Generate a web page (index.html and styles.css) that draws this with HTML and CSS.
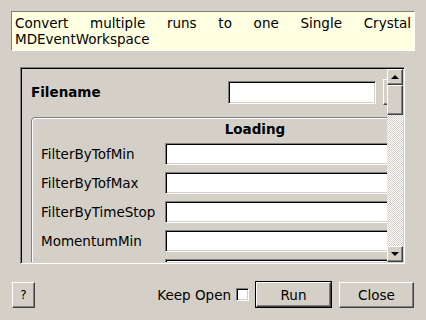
FILE: index.html
```html
<!DOCTYPE html>
<html lang="en">
<head>
    <meta charset="UTF-8">
    <title>Algorithm dialog</title>
    <link rel="stylesheet" href="styles.css">
</head>
<body>
    <div class="dialog">
        <div class="description">Convert multiple runs to one Single Crystal MDEventWorkspace</div>

        <div class="scroll-area">
            <div class="viewport">
                <div class="file-row">
                    <span class="file-label">Filename</span>
                    <span class="field file-field"></span>
                    <span class="button browse"></span>
                </div>

                <div class="group">
                    <div class="group-title">Loading</div>
                    <div class="prop-row">
                        <span class="prop-label">FilterByTofMin</span>
                        <span class="field"></span>
                    </div>
                    <div class="prop-row">
                        <span class="prop-label">FilterByTofMax</span>
                        <span class="field"></span>
                    </div>
                    <div class="prop-row">
                        <span class="prop-label">FilterByTimeStop</span>
                        <span class="field"></span>
                    </div>
                    <div class="prop-row">
                        <span class="prop-label">MomentumMin</span>
                        <span class="field"></span>
                    </div>
                    <!-- next row only shows its field edge above the fold -->
                    <div class="prop-row">
                        <span class="prop-label"></span>
                        <span class="field"></span>
                    </div>
                </div>
            </div>

            <!-- vertical scrollbar -->
            <div class="vscroll">
                <span class="button arrow-btn"><span class="arrow up"></span></span>
                <span class="button handle"></span>
                <span class="track"></span>
                <span class="button arrow-btn"><span class="arrow down"></span></span>
            </div>
        </div>

        <div class="bottom-bar">
            <span class="button help-btn">?</span>
            <span class="keep-open">Keep Open</span>
            <span class="checkbox"></span>
            <span class="default-frame"><span class="button run-btn">Run</span></span>
            <span class="button close-btn">Close</span>
        </div>
    </div>
</body>
</html>
```

FILE: styles.css
```css
* {
    box-sizing: border-box;
}

body {
    margin: 0;
    background-color: #d4d0c8;
    font-family: 'DejaVu Sans', sans-serif;
    font-size: 13.5px;
    color: #000;
    overflow: hidden;
}

.dialog {
    display: flex;
    flex-direction: column;
    height: 320px;
}

.description {
    margin: 11px 11px 0;
    height: 40px;
    padding: 3px 3px 0;
    line-height: 16px;
    text-align: justify;
    background-color: #ffffe1;
    border-top: 1px solid #808080;
    border-left: 1px solid #808080;
    border-right: 1px solid #fff;
    border-bottom: 1px solid #fff;
}

/* sunken frame of the scroll area */
.scroll-area {
    display: flex;
    margin: 16px 21px 0 20px;
    height: 197px;
    border: 1px solid;
    border-color: #808080 #fff #fff #808080;
    box-shadow: inset 1px 1px #000, inset -1px -1px #d4d0c8;
    padding: 1px;
}

.viewport {
    flex: 1;
    overflow: hidden;
    padding: 10px 0 0 9px;
}

.button {
    display: flex;
    align-items: center;
    justify-content: center;
    background-color: #d4d0c8;
    border: 1px solid;
    border-color: #fff #404040 #404040 #fff;
    box-shadow: inset -1px -1px #808080;
}

.field {
    display: block;
    background-color: #fff;
    border: 1px solid;
    border-color: #808080 #fff #fff #808080;
    box-shadow: inset 1px 1px #000, inset -1px -1px #d4d0c8;
}

.file-row {
    display: flex;
    align-items: center;
    height: 26px;
    width: 420px;
}

.file-label {
    width: 197px;
    font-weight: bold;
}

.file-field {
    width: 148px;
    height: 23px;
}

.browse {
    width: 30px;
    height: 26px;
    margin-left: 7px;
}

.group {
    width: 439px;
    margin-top: 12px;
    padding: 0 0 0 9px;
    border: 1px solid #808080;
    border-radius: 4px;
    box-shadow: inset 1px 1px #fff;
}

.group-title {
    text-align: center;
    font-weight: bold;
    height: 25px;
    line-height: 22px;
}

.prop-row {
    display: flex;
    align-items: center;
    height: 22px;
    margin-bottom: 7px;
}

.prop-label {
    width: 124px;
    flex-shrink: 0;
}

.prop-row .field {
    width: 290px;
    height: 22px;
}

.vscroll {
    width: 16px;
    display: flex;
    flex-direction: column;
}

.arrow-btn {
    height: 16px;
}

.handle {
    height: 30px;
}

.track {
    flex: 1;
    background: repeating-conic-gradient(#fff 0 25%, #d4d0c8 0 50%) 0 0 / 2px 2px;
}

.arrow {
    width: 0;
    height: 0;
    border-left: 4px solid transparent;
    border-right: 4px solid transparent;
}

.arrow.up {
    border-bottom: 4px solid #000;
}

.arrow.down {
    border-top: 4px solid #000;
}

.bottom-bar {
    display: flex;
    align-items: center;
    margin-top: 17px;
    height: 27px;
    padding: 0 12px;
}

.help-btn {
    width: 23px;
    height: 26px;
    font-size: 12px;
    margin-right: auto;
}

.keep-open {
    margin-right: 5px;
}

.checkbox {
    width: 13px;
    height: 13px;
    background-color: #fff;
    border: 1px solid;
    border-color: #808080 #fff #fff #808080;
    box-shadow: inset 1px 1px #000, inset -1px -1px #d4d0c8;
    margin-right: 6px;
}

.default-frame {
    display: block;
    border: 1px solid #000;
}

.run-btn {
    width: 75px;
    height: 25px;
}

.close-btn {
    width: 75px;
    height: 26px;
    margin-left: 7px;
}
```
